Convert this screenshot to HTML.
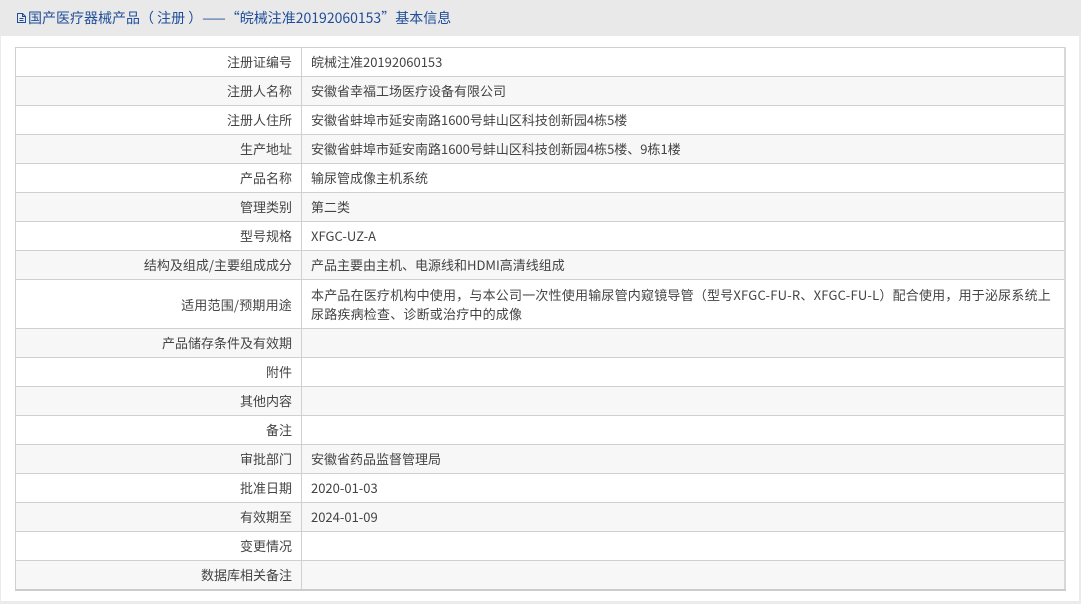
<!DOCTYPE html>
<html><head><meta charset="utf-8"><style>
*{margin:0;padding:0;box-sizing:border-box}
body{width:1081px;height:604px;background:#ebebeb;font-family:"Noto Sans CJK SC","Liberation Sans",sans-serif;font-size:13px;color:#444;overflow:hidden;position:relative}
.hd{position:absolute;left:0;top:0;width:1081px;height:36px;background:#e9e9e9;color:#1f4d99;font-size:14px;line-height:36px;padding-left:16px}
.panel{position:absolute;left:1px;top:36px;width:1078px;height:565px;background:#fff}
table{position:absolute;left:15px;top:47px;width:1051px;border-collapse:collapse;border-right:2px solid #d8d8d8;border-bottom:2px solid #ccc}
td{border:1px solid #d0d0d0;height:29px;padding:0 9px;vertical-align:middle;white-space:nowrap;line-height:18px}
td.l{width:286px;text-align:right}
tr:nth-child(even) td{background:#f7f7f7}
tr.t td{height:49px;line-height:19px;letter-spacing:0.2px}
</style></head><body>
<div class="hd"><svg width="11" height="12" viewBox="0 0 11 12" style="vertical-align:-1px;margin-right:1px"><path d="M1.5 1.5h5l3 3v6h-8z M6.5 1.5v3h3 M3.5 6.5h4 M3.5 8.5h4" fill="none" stroke="#1f4d99" stroke-width="1"/></svg>国产医疗器械产品（ 注册 ）——“皖械注准20192060153”基本信息</div>
<div class="panel"></div>
<table>
<tr><td class="l">注册证编号</td><td>皖械注准20192060153</td></tr>
<tr><td class="l">注册人名称</td><td>安徽省幸福工场医疗设备有限公司</td></tr>
<tr><td class="l">注册人住所</td><td>安徽省蚌埠市延安南路1600号蚌山区科技创新园4栋5楼</td></tr>
<tr><td class="l">生产地址</td><td>安徽省蚌埠市延安南路1600号蚌山区科技创新园4栋5楼、9栋1楼</td></tr>
<tr><td class="l">产品名称</td><td>输尿管成像主机系统</td></tr>
<tr><td class="l">管理类别</td><td>第二类</td></tr>
<tr><td class="l">型号规格</td><td>XFGC-UZ-A</td></tr>
<tr><td class="l">结构及组成/主要组成成分</td><td>产品主要由主机、电源线和HDMI高清线组成</td></tr>
<tr class="t"><td class="l">适用范围/预期用途</td><td>本产品在医疗机构中使用，与本公司一次性使用输尿管内窥镜导管（型号XFGC-FU-R、XFGC-FU-L）配合使用，用于泌尿系统上<br>尿路疾病检查、诊断或治疗中的成像</td></tr>
<tr><td class="l">产品储存条件及有效期</td><td></td></tr>
<tr><td class="l">附件</td><td></td></tr>
<tr><td class="l">其他内容</td><td></td></tr>
<tr><td class="l">备注</td><td></td></tr>
<tr><td class="l">审批部门</td><td>安徽省药品监督管理局</td></tr>
<tr><td class="l">批准日期</td><td>2020-01-03</td></tr>
<tr><td class="l">有效期至</td><td>2024-01-09</td></tr>
<tr><td class="l">变更情况</td><td></td></tr>
<tr><td class="l">数据库相关备注</td><td></td></tr>
</table>
</body></html>
